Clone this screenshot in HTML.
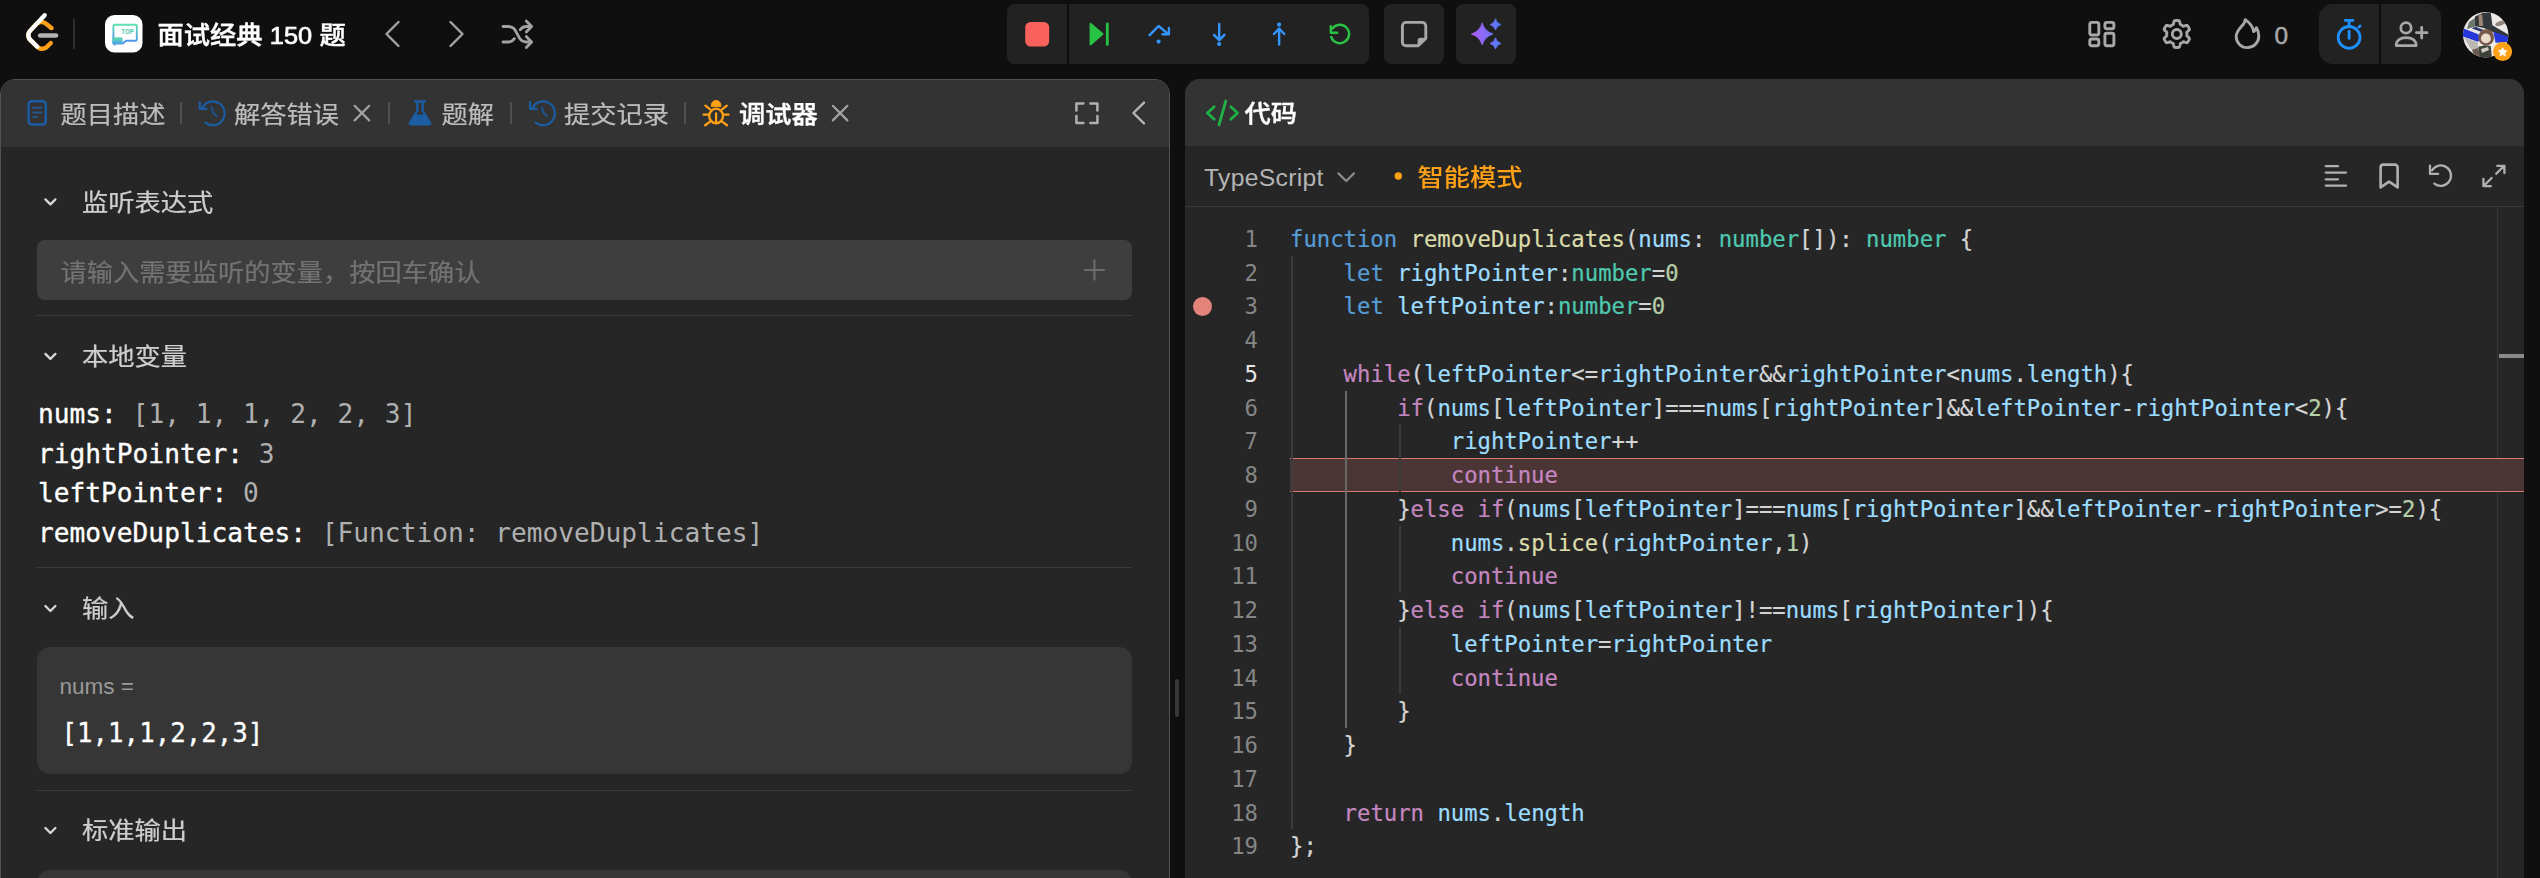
<!DOCTYPE html>
<html lang="zh-CN">
<head>
<meta charset="utf-8">
<title>面试经典 150 题 - 调试器</title>
<style>
html,body{margin:0;padding:0;background:#0f0f0f;width:2540px;height:878px;overflow:hidden}
body{font-family:"Liberation Sans","Noto Sans CJK SC",sans-serif;color:#fff;position:relative;-webkit-font-smoothing:antialiased}
.a{position:absolute}
svg{display:block;overflow:visible}
/* NAV */
#nav{left:0;top:0;width:2540px;height:79px;background:#0f0f0f}
.grp{background:#222;position:absolute}
/* PANELS */
.panel{background:#262626;box-sizing:border-box;overflow:hidden}
#pl{left:0;top:79px;width:1170px;height:820px;border:1.5px solid #525252;border-radius:15px 15px 0 0}
#pr{left:1185px;top:79px;width:1339px;height:820px;border-radius:15px 15px 0 0}
.tabbar{left:0;top:0;right:0;height:67px;background:#333}
.tab{position:absolute;transform:scaleY(.93);top:1.8px;height:67px;line-height:67px;font-size:26.25px;color:#bcbcbc;-webkit-text-stroke:0.25px #bcbcbc;white-space:nowrap}
.sep{position:absolute;top:22px;width:2px;height:21.5px;background:#505050}
/* left content */
.sec{position:absolute;transform:scaleY(.93);left:81px;font-size:26.25px;color:#cecece;-webkit-text-stroke:0.25px #cecece;line-height:38px;white-space:nowrap}
.hr{position:absolute;left:36px;width:1095px;height:1.3px;background:#3d3d3d}
.mono{font-family:"DejaVu Sans Mono","Liberation Mono",monospace}
.var{position:absolute;left:37px;font-size:26.2px;line-height:39.4px;white-space:pre;color:#b0b0b0}
.var b{font-weight:normal;color:#fff;-webkit-text-stroke:0.35px #fff}
/* code */
.ln{position:absolute;left:0;width:73px;text-align:right;font-size:22.26px;line-height:33.75px;height:33.75px;color:#858585}
.cl{position:absolute;left:105px;font-size:22.26px;line-height:33.75px;height:33.75px;white-space:pre;color:#d4d4d4;-webkit-text-stroke-width:0.22px}
.k{color:#569cd6}.f{color:#dcdcaa}.v{color:#9cdcfe}.t{color:#4ec9b0}.c{color:#c586c0}.n{color:#b5cea8}
.b1{color:#ffd700}.b2{color:#da70d6}.b3{color:#179fff}
.cur{color:#e6e6e6}
.g{position:absolute;width:2px;background:#3c3c3c}
.ga{background:#686868}
</style>
</head>
<body>
<div id="nav" class="a">
<!-- logo -->
<svg class="a" style="left:26px;top:13px" width="32.5" height="38" viewBox="0 0 95 111">
<path d="M68.0063 83.0664C70.5 80.5764 74.5366 80.5829 77.0223 83.0809C79.508 85.579 79.5015 89.6226 77.0078 92.1127L65.9346 103.17C55.7187 113.371 39.06 113.519 28.6718 103.513C28.6117 103.456 23.9861 98.9201 8.72653 83.957C-1.42528 74.0029 -2.43665 58.0749 7.11648 47.8464L24.9282 28.7745C34.4095 18.6219 51.887 17.5122 62.7275 26.2789L78.9048 39.362C81.6444 41.5776 82.0723 45.5985 79.8606 48.3429C77.6488 51.0873 73.635 51.5159 70.8954 49.3003L54.7182 36.2173C49.0488 31.6325 39.1314 32.2622 34.2394 37.5006L16.4274 56.5727C11.7767 61.5522 12.2861 69.574 17.6456 74.8292C28.851 85.8169 37.4869 94.2846 37.4969 94.2942C42.8977 99.496 51.6304 99.4184 56.9331 94.1234L68.0063 83.0664Z" fill="#FFA116"/>
<path d="M41.1067 72.0014C37.5858 72.0014 34.7314 69.1421 34.7314 65.615C34.7314 62.0879 37.5858 59.2286 41.1067 59.2286H88.1245C91.6454 59.2286 94.4997 62.0879 94.4997 65.615C94.4997 69.1421 91.6454 72.0014 88.1245 72.0014H41.1067Z" fill="#B3B3B3"/>
<path d="M49.9118 2.02335C52.3173 -0.55232 56.3517 -0.686894 58.9228 1.72277C61.494 4.13244 61.6284 8.17385 59.2229 10.7495L16.4276 56.5729C11.7768 61.552 12.2861 69.5738 17.6453 74.8292L37.4088 94.2091C39.9249 96.6764 39.968 100.72 37.505 103.24C35.042 105.761 31.0056 105.804 28.4895 103.337L8.72593 83.9567C-1.42529 74.0021 -2.43665 58.0741 7.1169 47.8463L49.9118 2.02335Z" fill="#fff"/>
</svg>
<div class="a" style="left:73px;top:19px;width:2px;height:30px;background:#2e2e2e"></div>
<!-- study plan icon -->
<svg class="a" style="left:105px;top:15px" width="38" height="38" viewBox="0 0 38 38">
<defs><linearGradient id="gtop" x1="0" y1="0" x2="0" y2="1"><stop offset="0" stop-color="#5fe0b0"/><stop offset="1" stop-color="#4a8df5"/></linearGradient></defs>
<rect x="0" y="0" width="37.5" height="37.5" rx="9.5" fill="#fff"/>
<path d="M9.5 9.8h21a1.3 1.3 0 0 1 1.3 1.3v13.4a1.3 1.3 0 0 1-1.3 1.3H21l-3.2 2.6" fill="none" stroke="url(#gtop)" stroke-width="1.9" stroke-linecap="round" stroke-linejoin="round"/>
<path d="M8.4 24.5V11.1a1.3 1.3 0 0 1 1.3-1.3" fill="none" stroke="url(#gtop)" stroke-width="1.9" stroke-linecap="round"/>
<path d="M7.2 23.6c0-.8.6-1.4 1.4-1.4h7.6c.8 0 1.4.6 1.4 1.4v4.6c0 .8-.6 1.4-1.4 1.4h-5.3l-2 1.6v-1.6h-.3c-.8 0-1.4-.6-1.4-1.4z" fill="url(#gtop)"/>
<text x="16.3" y="18.6" font-family="Liberation Sans, sans-serif" font-weight="bold" font-size="7.4" textLength="12.6" lengthAdjust="spacingAndGlyphs" fill="#4fc7a6">TOP</text>
</svg>
<div class="a" style="left:157.5px;top:16px;height:38px;line-height:38px;font-size:26.25px;font-weight:500;-webkit-text-stroke:0.45px #fff;white-space:nowrap;color:#fff;transform:scaleY(.95)">面试经典 <span style="font-size:25.4px;-webkit-text-stroke:0.7px #fff">150</span> 题</div>
<!-- chevrons + shuffle -->
<svg class="a" style="left:0;top:0" width="2540" height="79" viewBox="0 0 2540 79" fill="none" stroke-linecap="round" stroke-linejoin="round">
<g stroke="#a3a3a3" stroke-width="2.4">
<path d="M398.5 22 L386.5 34 L398.5 46"/>
<path d="M450.5 22 L462.5 34 L450.5 46"/>
</g><g stroke="#a3a3a3" stroke-width="2.8">
<path d="M503 26.5 H508.5 C513.5 26.5 515 29.5 517.3 34.2 C519.8 39.2 521.5 42 526.5 42 H531"/>
<path d="M503 42 H508.5 C511.5 42 513 40.8 514.4 38.6"/>
<path d="M520.2 29.8 C521.6 27.6 523.5 26.5 526.5 26.5 H531"/>
<path d="M526.3 21 L531.6 26.5 L526.3 32"/>
<path d="M526.3 36.5 L531.6 42 L526.3 47.5"/>
</g>
</svg>
<!-- debug group -->
<div class="grp" style="left:1007px;top:4px;width:60px;height:60px;border-radius:7.5px 0 0 7.5px"></div>
<div class="grp" style="left:1069px;top:4px;width:300px;height:60px;border-radius:0 7.5px 7.5px 0"></div>
<div class="grp" style="left:1384px;top:4px;width:60px;height:60px;border-radius:7.5px"></div>
<div class="grp" style="left:1456px;top:4px;width:60px;height:60px;border-radius:7.5px"></div>
<div class="grp" style="left:2319px;top:4px;width:60px;height:60px;border-radius:14px 0 0 14px"></div>
<div class="grp" style="left:2381px;top:4px;width:60px;height:60px;border-radius:0 14px 14px 0"></div>
<svg class="a" style="left:0;top:0" width="2540" height="79" viewBox="0 0 2540 79" fill="none" stroke-linecap="round" stroke-linejoin="round">
<defs><linearGradient id="gai" x1="1471" y1="0" x2="1501" y2="0" gradientUnits="userSpaceOnUse"><stop offset="0" stop-color="#b45cf5"/><stop offset="1" stop-color="#4f7dfb"/></linearGradient></defs>
<!-- stop -->
<rect x="1025.2" y="22" width="24" height="24.5" rx="5.5" fill="#f8615c"/>
<!-- continue -->
<path d="M1090.5 23.6 L1102.6 34 L1090.5 44.6 Z" fill="#28c244" stroke="#28c244" stroke-width="1.8"/>
<path d="M1107.3 24 V44.4" stroke="#28c244" stroke-width="2.8"/>
<!-- step over -->
<g stroke="#3396ff" stroke-width="2.4">
<path d="M1149.6 35.2 L1158.6 26 L1168 33.8"/>
<path d="M1168.9 28 V34.2 H1162.6"/>
<circle cx="1158.6" cy="41.6" r="0.9" fill="#3396ff"/>
<!-- step into -->
<path d="M1219.2 24 V39.6"/>
<path d="M1214 34.8 L1219.2 40.2 L1224.4 34.8"/>
<circle cx="1219.2" cy="44" r="0.9" fill="#3396ff"/>
<!-- step out -->
<path d="M1279.1 29.4 V44.6"/>
<path d="M1273.9 34 L1279.1 28.6 L1284.3 34"/>
<circle cx="1279.1" cy="24.6" r="0.9" fill="#3396ff"/>
</g>
<!-- restart -->
<g stroke="#28c244" stroke-width="2.4">
<path d="M1332.4 28.6 A9.2 9.2 0 1 1 1331.2 37"/>
<path d="M1330.8 26.2 V32.8 H1337.2"/>
</g>
<!-- note -->
<path d="M1406 22.4 H1422.2 A3.6 3.6 0 0 1 1425.8 26 V38.4 L1418.2 45.8 H1406 A3.6 3.6 0 0 1 1402.4 42.2 V26 A3.6 3.6 0 0 1 1406 22.4 Z" stroke="#a8a8a8" stroke-width="2.9"/>
<path d="M1425.8 38.4 H1420.4 A2 2 0 0 0 1418.4 40.4 V45.6 Z" fill="#a8a8a8" stroke="#a8a8a8" stroke-width="1.5"/>
<!-- ai sparkles -->
<g fill="url(#gai)" stroke="url(#gai)" stroke-width="0.8" stroke-linejoin="round">
<path d="M1482.20 23.20 Q1484.79 31.41 1493.00 34.00 Q1484.79 36.59 1482.20 44.80 Q1479.61 36.59 1471.40 34.00 Q1479.61 31.41 1482.20 23.20 Z"/>
<path d="M1495.50 19.20 Q1496.80 23.30 1500.90 24.60 Q1496.80 25.90 1495.50 30.00 Q1494.20 25.90 1490.10 24.60 Q1494.20 23.30 1495.50 19.20 Z"/>
<path d="M1495.50 38.10 Q1496.80 42.20 1500.90 43.50 Q1496.80 44.80 1495.50 48.90 Q1494.20 44.80 1490.10 43.50 Q1494.20 42.20 1495.50 38.10 Z"/>
</g>
<!-- layout grid -->
<g stroke="#a8a8a8" stroke-width="2.9">
<rect x="2089.8" y="22.4" width="9" height="12.6" rx="2"/>
<rect x="2089.8" y="39" width="9" height="6.8" rx="2"/>
<rect x="2104.9" y="22.4" width="9" height="6.4" rx="2"/>
<rect x="2104.9" y="33.2" width="9" height="12.6" rx="2"/>
</g>
<!-- gear -->
<g stroke="#a8a8a8" stroke-width="2.9" transform="translate(2176.8 34)">
<path d="M0.00 13.50 L-0.47 13.49 L-0.94 13.47 L-1.41 13.43 L-1.88 13.37 L-2.34 13.29 L-2.69 12.67 L-2.95 11.83 L-3.14 10.97 L-3.29 10.12 L-3.45 9.49 L-3.78 9.36 L-4.11 9.23 L-4.43 9.08 L-4.74 8.92 L-5.05 8.75 L-5.35 8.57 L-5.65 8.37 L-5.94 8.17 L-6.22 7.96 L-6.49 7.74 L-7.12 7.91 L-7.93 8.21 L-8.77 8.47 L-9.63 8.67 L-10.34 8.68 L-10.64 8.31 L-10.92 7.94 L-11.19 7.55 L-11.45 7.15 L-11.69 6.75 L-11.92 6.34 L-12.13 5.92 L-12.33 5.49 L-12.52 5.06 L-12.69 4.62 L-12.32 4.00 L-11.72 3.36 L-11.07 2.76 L-10.41 2.21 L-9.95 1.75 L-10.00 1.41 L-10.04 1.06 L-10.08 0.70 L-10.09 0.35 L-10.10 0.00 L-10.09 -0.35 L-10.08 -0.70 L-10.04 -1.06 L-10.00 -1.41 L-9.95 -1.75 L-10.41 -2.21 L-11.07 -2.76 L-11.72 -3.36 L-12.32 -4.00 L-12.69 -4.62 L-12.52 -5.06 L-12.33 -5.49 L-12.13 -5.92 L-11.92 -6.34 L-11.69 -6.75 L-11.45 -7.15 L-11.19 -7.55 L-10.92 -7.94 L-10.64 -8.31 L-10.34 -8.68 L-9.63 -8.67 L-8.77 -8.47 L-7.93 -8.21 L-7.12 -7.91 L-6.49 -7.74 L-6.22 -7.96 L-5.94 -8.17 L-5.65 -8.37 L-5.35 -8.57 L-5.05 -8.75 L-4.74 -8.92 L-4.43 -9.08 L-4.11 -9.23 L-3.78 -9.36 L-3.45 -9.49 L-3.29 -10.12 L-3.14 -10.97 L-2.95 -11.83 L-2.69 -12.67 L-2.34 -13.29 L-1.88 -13.37 L-1.41 -13.43 L-0.94 -13.47 L-0.47 -13.49 L-0.00 -13.50 L0.47 -13.49 L0.94 -13.47 L1.41 -13.43 L1.88 -13.37 L2.34 -13.29 L2.69 -12.67 L2.95 -11.83 L3.14 -10.97 L3.29 -10.12 L3.45 -9.49 L3.78 -9.36 L4.11 -9.23 L4.43 -9.08 L4.74 -8.92 L5.05 -8.75 L5.35 -8.57 L5.65 -8.37 L5.94 -8.17 L6.22 -7.96 L6.49 -7.74 L7.12 -7.91 L7.93 -8.21 L8.77 -8.47 L9.63 -8.67 L10.34 -8.68 L10.64 -8.31 L10.92 -7.94 L11.19 -7.55 L11.45 -7.15 L11.69 -6.75 L11.92 -6.34 L12.13 -5.92 L12.33 -5.49 L12.52 -5.06 L12.69 -4.62 L12.32 -4.00 L11.72 -3.36 L11.07 -2.76 L10.41 -2.21 L9.95 -1.75 L10.00 -1.41 L10.04 -1.06 L10.08 -0.70 L10.09 -0.35 L10.10 -0.00 L10.09 0.35 L10.08 0.70 L10.04 1.06 L10.00 1.41 L9.95 1.75 L10.41 2.21 L11.07 2.76 L11.72 3.36 L12.32 4.00 L12.69 4.62 L12.52 5.06 L12.33 5.49 L12.13 5.92 L11.92 6.34 L11.69 6.75 L11.45 7.15 L11.19 7.55 L10.92 7.94 L10.64 8.31 L10.34 8.68 L9.63 8.67 L8.77 8.47 L7.93 8.21 L7.12 7.91 L6.49 7.74 L6.22 7.96 L5.94 8.17 L5.65 8.37 L5.35 8.57 L5.05 8.75 L4.74 8.92 L4.43 9.08 L4.11 9.23 L3.78 9.36 L3.45 9.49 L3.29 10.12 L3.14 10.97 L2.95 11.83 L2.69 12.67 L2.34 13.29 L1.88 13.37 L1.41 13.43 L0.94 13.47 L0.47 13.49 Z"/>
<circle cx="0" cy="0" r="4.5"/>
</g>
<!-- flame -->
<path d="M2245.2 19.6 C2250.6 23.2 2253.2 28 2253.6 31.6 C2255.2 30.8 2256 29.4 2256.4 27.6 C2258 30.2 2258.8 33 2258.8 36 C2258.8 42.6 2253.8 47.6 2247.4 47.6 C2241 47.6 2236.2 42.8 2236.2 36.6 C2236.2 30.6 2241 27.4 2243.6 24 C2244.6 22.6 2245.2 21.2 2245.2 19.6 Z" stroke="#a8a8a8" stroke-width="2.9"/>
<!-- stopwatch -->
<g stroke="#1e90ff" stroke-width="2.8">
<circle cx="2349.1" cy="37.4" r="10.9"/>
<path d="M2345.3 20.4 H2352.9"/>
<path d="M2349.1 20.6 V26"/>
<path d="M2349.1 31.2 V38.4"/>
<path d="M2358.9 27.1 L2360.1 25.9"/>
</g>
<!-- user plus -->
<g stroke="#a8a8a8" stroke-width="2.8">
<circle cx="2406" cy="27.9" r="5.2"/>
<path d="M2396.2 45.6 C2396.2 40.6 2400.4 37.6 2406.2 37.6 C2412 37.6 2416.2 40.6 2416.2 45.6 Z"/>
<path d="M2421.7 27.4 V38"/>
<path d="M2416.4 32.7 H2427"/>
</g>
</svg>
<div class="a" style="left:2274.5px;top:19.5px;height:32px;line-height:32px;font-size:24.4px;color:#a8a8a8;-webkit-text-stroke:0.5px #a8a8a8">0</div>
<!-- avatar -->
<svg class="a" style="left:2462.9px;top:11.5px" width="52" height="52" viewBox="0 0 52 52">
<defs><filter id="avb" x="-10%" y="-10%" width="120%" height="120%"><feGaussianBlur stdDeviation="0.7"/></filter><clipPath id="avc"><circle cx="22.7" cy="22.7" r="22.7"/></clipPath></defs>
<g clip-path="url(#avc)">
<rect width="46" height="46" fill="#ece9e6"/><g filter="url(#avb)">
<path d="M12 4.4 L19.5 1 L27.7 0 L29.4 13.3 L44.8 22.2 L46 26 L30.4 20.2 L20.8 16.1 L11.3 14 Z" fill="#33373a"/>
<path d="M15.4 2.4 L19.1 2.4 L20.2 14 L16.1 14 Z" fill="#9c8674"/>
<path d="M6 10 L12 6 L11 15 L4 17 Z" fill="#4a5a50" opacity="0.8"/>
<path d="M0 16.2 L14.7 21.9 L19.5 25.6 L14.7 29.7 L0 24.4 Z" fill="#2739dc"/>
<path d="M30.4 19.8 L46 25.3 L46 30 L32.5 30.8 Z" fill="#2739dc"/>
<path d="M9 16.5 L20 20.5 L22 18.5 L12 14.5 Z" fill="#2c3f74"/>
<ellipse cx="37.3" cy="11.3" rx="5.2" ry="2.2" transform="rotate(-18 37.3 11.3)" fill="#91867b"/>
<path d="M1 25.6 L14.7 30.4 L15.4 41.4 L7.9 37.3 Z" fill="#bdb7b1"/>
<ellipse cx="23.2" cy="25.4" rx="7.8" ry="8.2" fill="#7a5a4c"/>
<ellipse cx="22.9" cy="26.4" rx="4.9" ry="4.9" fill="#eadbcc"/>
<path d="M15.4 34.8 L22 33.2 L27.7 34 L29 46 L16 46 Z" fill="#3d4238"/>
<path d="M18 37 L25 35 L26 38 L19 41 Z" fill="#e8e4df" opacity="0.85"/>
<path d="M9 38 L15 36 L17 44 L12 46 Z" fill="#6b5a52"/>
</g></g>
<circle cx="39.6" cy="39.6" r="9.5" fill="#ffa116"/>
<path transform="translate(39.6 39.9) scale(0.74) translate(-39.3 -39)" d="M39.3 33.4 l1.75 3.55 3.9 .57 -2.83 2.76 .67 3.9 -3.49 -1.84 -3.49 1.84 .67 -3.9 -2.83 -2.76 3.9 -.57z" fill="#fff" stroke="#fff" stroke-width="1.2" stroke-linejoin="round"/>
</svg>

</div>

<div id="pl" class="a panel">
  <div class="a tabbar">
<svg class="a" style="left:-1.5px;top:-1.5px" width="1170" height="70" viewBox="0 79 1170 70" fill="none" stroke-linecap="round" stroke-linejoin="round">
<!-- doc icon -->
<g stroke="#1b5ca3" stroke-width="2.5">
<rect x="28.6" y="101.2" width="17.2" height="23.4" rx="3.4"/>
<path d="M33 107.8 H41.4 M33 112.4 H41.4 M33 117 H37" stroke-width="2" stroke="#27558a"/>
</g>
<!-- history 1 -->
<g stroke="#1b5ca3" stroke-width="2.2">
<path d="M202.19 107.71 A11.9 11.9 0 1 1 205.37 122.68"/>
<path d="M199.8 102 V108.8 H206.6"/>
<path d="M211.7 107.2 L213 112.8 L216.8 116.2" stroke-width="1.9" stroke="#1b5594"/>
</g>
<g stroke="#1b5ca3" stroke-width="2.2" transform="translate(330.3 0)">
<path d="M202.19 107.71 A11.9 11.9 0 1 1 205.37 122.68"/>
<path d="M199.8 102 V108.8 H206.6"/>
<path d="M211.7 107.2 L213 112.8 L216.8 116.2" stroke-width="1.9" stroke="#1b5594"/>
</g>
<!-- close x -->
<g stroke="#a3a3a3" stroke-width="2.2">
<path d="M354.6 105.8 L369.2 120.4 M369.2 105.8 L354.6 120.4"/>
<path d="M832.8 105.8 L847.4 120.4 M847.4 105.8 L832.8 120.4"/>
</g>
<!-- flask -->
<path d="M414 100.2 H426 V102.8 H423.8 V110.4 L431 122.2 C432 124 431 125.6 429 125.6 H411 C409 125.6 408 124 409 122.2 L416.2 110.4 V102.8 H414 Z M418.6 102.8 V111 L416.4 114.6 H423.6 L421.4 111 V102.8 Z" fill="#1b5ca3" fill-rule="evenodd" stroke="none"/>
<!-- bug -->
<g stroke="#ffa116" stroke-width="2.3">
<path d="M711.4 106.2 V105 A4.7 4.5 0 0 1 720.8 105 V106.2 Z" fill="#ffa116" stroke-width="1" stroke-linejoin="round"/>
<ellipse cx="716.1" cy="116" rx="6.9" ry="7.3"/>
<path d="M716.1 113.4 V122.6" stroke-width="2.2"/>
<path d="M710.2 109.4 L705.4 105.6 M722 109.4 L726.8 105.6"/>
<path d="M708.4 114.6 H703.6 M723.8 114.6 H728.6"/>
<path d="M710.4 121.4 L705.2 125.2 M721.8 121.4 L727 125.2"/>
</g>
<!-- expand -->
<g stroke="#b0b0b0" stroke-width="2.5">
<path d="M1076.4 110.4 V103.4 H1083.4"/>
<path d="M1090.4 103.4 H1097.4 V110.4"/>
<path d="M1097.4 116 V123 H1090.4"/>
<path d="M1083.4 123 H1076.4 V116"/>
</g>
<path d="M1144 102.6 L1133.4 113 L1144 123.4" stroke="#b5b5b5" stroke-width="2.4"/>
</svg>
<div class="tab" style="left:59.5px">题目描述</div>
<div class="sep" style="left:178.5px"></div>
<div class="tab" style="left:233px">解答错误</div>
<div class="sep" style="left:386.5px"></div>
<div class="tab" style="left:440.5px">题解</div>
<div class="sep" style="left:508.5px"></div>
<div class="tab" style="left:563px">提交记录</div>
<div class="sep" style="left:682.5px"></div>
<div class="tab" style="left:738px;color:#fff;font-weight:500;-webkit-text-stroke:0.4px #fff">调试器</div>

  </div>
<div class="sec" style="top:103.6px">监听表达式</div>
<div class="a" style="left:35.5px;top:159.5px;width:1095px;height:60px;border-radius:8px;background:#3e3e3e"></div>
<div class="a" style="left:59.5px;top:173.5px;height:38px;line-height:38px;font-size:26.25px;color:#737373;-webkit-text-stroke:0.25px #737373;white-space:nowrap;transform:scaleY(.93)">请输入需要监听的变量，按回车确认</div>
<div class="hr" style="top:235px;left:35.5px"></div>
<div class="sec" style="top:258.1px">本地变量</div>
<div class="var mono" style="top:315.3px"><b>nums:</b> [1, 1, 1, 2, 2, 3]</div>
<div class="var mono" style="top:354.7px"><b>rightPointer:</b> 3</div>
<div class="var mono" style="top:394.1px"><b>leftPointer:</b> 0</div>
<div class="var mono" style="top:433.5px"><b>removeDuplicates:</b> [Function: removeDuplicates]</div>
<div class="hr" style="top:487px;left:35.5px"></div>
<div class="sec" style="top:510.1px">输入</div>
<div class="a" style="left:35.5px;top:567px;width:1095px;height:127px;border-radius:13px;background:#363636"></div>
<div class="a" style="left:58.5px;top:589px;height:36px;line-height:36px;font-size:22.5px;color:#9a9a9a;white-space:nowrap">nums =</div>
<div class="a mono" style="left:60.5px;top:633px;height:40px;line-height:40px;font-size:25.8px;color:#fff;white-space:pre;-webkit-text-stroke:0.3px #fff">[1,1,1,2,2,3]</div>
<div class="hr" style="top:710px;left:35.5px"></div>
<div class="sec" style="top:732.1px">标准输出</div>
<div class="a" style="left:35.5px;top:789.5px;width:1095px;height:60px;border-radius:13px;background:#363636"></div>
<svg class="a" style="left:-1.5px;top:-1.5px" width="1170" height="800" viewBox="0 79 1170 800" fill="none" stroke="#d8d8d8" stroke-width="2.3" stroke-linecap="round" stroke-linejoin="round">
<path d="M45.4 199.4 L50.4 204.4 L55.4 199.4"/>
<path d="M45.4 353.9 L50.4 358.9 L55.4 353.9"/>
<path d="M45.4 606 L50.4 611 L55.4 606"/>
<path d="M45.4 828 L50.4 833 L55.4 828"/>
<path d="M1094.4 260.4 V279.6 M1084.8 270 H1104" stroke="#6a6a6a" stroke-width="2.2"/>
</svg>

</div>

<div class="a" style="left:1175px;top:679px;width:4px;height:38px;border-radius:2px;background:#373737"></div>
<div id="pr" class="a panel">
  <div class="a tabbar">
<svg class="a" style="left:0;top:0" width="200" height="67" viewBox="1185 79 200 67" fill="none" stroke="#20b046" stroke-width="2.8" stroke-linecap="round" stroke-linejoin="round">
<path d="M1214.2 106.8 L1207.4 113 L1214.2 119.2"/>
<path d="M1225.8 101 L1219 125"/>
<path d="M1230.8 106.8 L1237.6 113 L1230.8 119.2"/>
</svg>
<div class="tab" style="left:59.5px;color:#fff;font-weight:500;-webkit-text-stroke:0.4px #fff">代码</div>

  </div>
<svg class="a" style="left:0;top:0" width="1339" height="140" viewBox="1185 79 1339 140" fill="none" stroke="#b0b0b0" stroke-width="2.3" stroke-linecap="round" stroke-linejoin="round">
<path d="M1338.4 173.4 L1346.2 181 L1354 173.4" stroke="#8c8c8c" stroke-width="2.2"/>
<circle cx="1398.3" cy="176" r="3.7" fill="#ffa116" stroke="none"/>
<!-- format -->
<path d="M2325.8 166.2 H2338 M2325.8 172.6 H2346 M2325.8 179.3 H2338 M2325.8 185.7 H2346"/>
<!-- bookmark -->
<path d="M2383.4 164.6 H2394.8 A2.8 2.8 0 0 1 2397.6 167.4 V187.4 L2389.1 181.6 L2380.6 187.4 V167.4 A2.8 2.8 0 0 1 2383.4 164.6 Z" stroke-width="2.6"/>
<!-- undo -->
<path d="M2432.2 170.2 A10.2 10.2 0 1 1 2434.4 183.6"/>
<path d="M2430 165.6 V173.8 H2438.2"/>
<!-- fullscreen -->
<path d="M2496.2 173.8 L2504.2 165.8 M2497.2 165.8 H2504.4 V173"/>
<path d="M2491.6 178 L2483.6 186 M2483.4 178.8 V186.2 H2490.8"/>
</svg>
<div class="a" style="left:19px;top:80.2px;height:38px;line-height:38px;font-size:24.7px;letter-spacing:0.3px;color:#b4b4b4;white-space:nowrap">TypeScript</div>
<div class="a" style="left:232.5px;top:79.8px;height:38px;line-height:38px;font-size:26.25px;font-weight:500;color:#ffa116;white-space:nowrap;transform:scaleY(.93)">智能模式</div>
<div class="a" style="left:0;top:127px;width:1339px;height:1.4px;background:#393939"></div>
<div class="a" id="code" style="left:0;top:0;width:1339px;height:820px">
<div class="a" style="left:1312px;top:128.5px;width:1.4px;height:700px;background:#363636"></div>
<div class="a" style="left:105px;top:379px;width:1234px;height:33.75px;background:#4b3535;border-top:1.6px solid #d9796f;border-bottom:1.6px solid #d9796f;box-sizing:border-box"></div>
<div class="a" style="left:1313.5px;top:275px;width:25.5px;height:3.5px;background:#8a8a8a"></div>
<!-- breakpoint -->
<div class="a" style="left:8px;top:217.5px;width:19px;height:19px;border-radius:50%;background:#e4827c"></div>
<!-- guides -->
<div class="g" style="left:105.5px;top:176.5px;height:573.75px"></div>
<div class="g ga" style="left:159.5px;top:311.5px;height:337.5px"></div>
<div class="g" style="left:213.5px;top:345.25px;height:67.5px"></div>
<div class="g" style="left:213.5px;top:446.5px;height:67.5px"></div>
<div class="g" style="left:213.5px;top:547.75px;height:67.5px"></div>
<div class="ln mono" style="top:143.95px">1</div>
<div class="cl mono" style="top:143.95px"><span class="k">function</span> <span class="f">removeDuplicates</span>(<span class="v">nums</span>: <span class="t">number</span>[]): <span class="t">number</span> {</div>
<div class="ln mono" style="top:177.70px">2</div>
<div class="cl mono" style="top:177.70px">    <span class="k">let</span> <span class="v">rightPointer</span>:<span class="t">number</span>=<span class="n">0</span></div>
<div class="ln mono" style="top:211.45px">3</div>
<div class="cl mono" style="top:211.45px">    <span class="k">let</span> <span class="v">leftPointer</span>:<span class="t">number</span>=<span class="n">0</span></div>
<div class="ln mono" style="top:245.20px">4</div>
<div class="ln cur mono" style="top:278.95px">5</div>
<div class="cl mono" style="top:278.95px">    <span class="c">while</span>(<span class="v">leftPointer</span>&lt;=<span class="v">rightPointer</span>&amp;&amp;<span class="v">rightPointer</span>&lt;<span class="v">nums</span>.<span class="v">length</span>){</div>
<div class="ln mono" style="top:312.70px">6</div>
<div class="cl mono" style="top:312.70px">        <span class="c">if</span>(<span class="v">nums</span>[<span class="v">leftPointer</span>]===<span class="v">nums</span>[<span class="v">rightPointer</span>]&amp;&amp;<span class="v">leftPointer</span>-<span class="v">rightPointer</span>&lt;<span class="n">2</span>){</div>
<div class="ln mono" style="top:346.45px">7</div>
<div class="cl mono" style="top:346.45px">            <span class="v">rightPointer</span>++</div>
<div class="ln mono" style="top:380.20px">8</div>
<div class="cl mono" style="top:380.20px">            <span class="c">continue</span></div>
<div class="ln mono" style="top:413.95px">9</div>
<div class="cl mono" style="top:413.95px">        }<span class="c">else</span> <span class="c">if</span>(<span class="v">nums</span>[<span class="v">leftPointer</span>]===<span class="v">nums</span>[<span class="v">rightPointer</span>]&amp;&amp;<span class="v">leftPointer</span>-<span class="v">rightPointer</span>&gt;=<span class="n">2</span>){</div>
<div class="ln mono" style="top:447.70px">10</div>
<div class="cl mono" style="top:447.70px">            <span class="v">nums</span>.<span class="f">splice</span>(<span class="v">rightPointer</span>,<span class="n">1</span>)</div>
<div class="ln mono" style="top:481.45px">11</div>
<div class="cl mono" style="top:481.45px">            <span class="c">continue</span></div>
<div class="ln mono" style="top:515.20px">12</div>
<div class="cl mono" style="top:515.20px">        }<span class="c">else</span> <span class="c">if</span>(<span class="v">nums</span>[<span class="v">leftPointer</span>]!==<span class="v">nums</span>[<span class="v">rightPointer</span>]){</div>
<div class="ln mono" style="top:548.95px">13</div>
<div class="cl mono" style="top:548.95px">            <span class="v">leftPointer</span>=<span class="v">rightPointer</span></div>
<div class="ln mono" style="top:582.70px">14</div>
<div class="cl mono" style="top:582.70px">            <span class="c">continue</span></div>
<div class="ln mono" style="top:616.45px">15</div>
<div class="cl mono" style="top:616.45px">        }</div>
<div class="ln mono" style="top:650.20px">16</div>
<div class="cl mono" style="top:650.20px">    }</div>
<div class="ln mono" style="top:683.95px">17</div>
<div class="ln mono" style="top:717.70px">18</div>
<div class="cl mono" style="top:717.70px">    <span class="c">return</span> <span class="v">nums</span>.<span class="v">length</span></div>
<div class="ln mono" style="top:751.45px">19</div>
<div class="cl mono" style="top:751.45px">};</div>
</div>
<!-- resize handle drawn in body -->

</div>
</body>
</html>
